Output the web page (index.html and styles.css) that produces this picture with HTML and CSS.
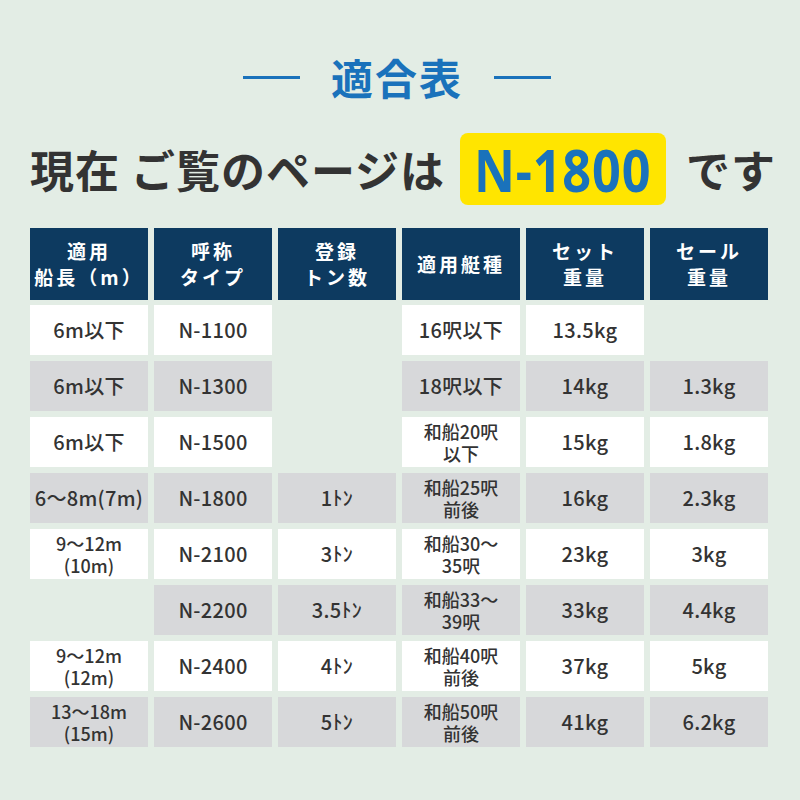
FILE: index.html
```html
<!DOCTYPE html>
<html lang="ja">
<head>
<meta charset="utf-8">
<link rel="stylesheet" href="styles.css">
</head>
<body>
<div class="page">
  <div class="title">
    <span class="rule"></span>
    <h1>適合表</h1>
    <span class="rule"></span>
  </div>
  <div class="lead">
    <span class="lead-text">現在 ご覧のページは</span>
    <span class="badge"><span class="badge-text">N-1800</span></span>
    <span class="lead-text">です</span>
  </div>
  <div class="table">
    <div class="th">適用<br>船長（m）</div>
    <div class="th">呼称<br>タイプ</div>
    <div class="th">登録<br>トン数</div>
    <div class="th">適用艇種</div>
    <div class="th">セット<br>重量</div>
    <div class="th">セール<br>重量</div>

    <div class="td w">6m以下</div>
    <div class="td w">N-1100</div>
    <div class="td e"></div>
    <div class="td w">16呎以下</div>
    <div class="td w">13.5kg</div>
    <div class="td e"></div>

    <div class="td g">6m以下</div>
    <div class="td g">N-1300</div>
    <div class="td e"></div>
    <div class="td g">18呎以下</div>
    <div class="td g">14kg</div>
    <div class="td g">1.3kg</div>

    <div class="td w">6m以下</div>
    <div class="td w">N-1500</div>
    <div class="td e"></div>
    <div class="td w sm"><span>和船20呎</span><span>以下</span></div>
    <div class="td w">15kg</div>
    <div class="td w">1.8kg</div>

    <div class="td g">6〜8m(7m)</div>
    <div class="td g">N-1800</div>
    <div class="td g">1ﾄﾝ</div>
    <div class="td g sm"><span>和船25呎</span><span>前後</span></div>
    <div class="td g">16kg</div>
    <div class="td g">2.3kg</div>

    <div class="td w sm"><span>9〜12m</span><span>(10m)</span></div>
    <div class="td w">N-2100</div>
    <div class="td w">3ﾄﾝ</div>
    <div class="td w sm"><span>和船30〜</span><span>35呎</span></div>
    <div class="td w">23kg</div>
    <div class="td w">3kg</div>

    <div class="td e"></div>
    <div class="td g">N-2200</div>
    <div class="td g">3.5ﾄﾝ</div>
    <div class="td g sm"><span>和船33〜</span><span>39呎</span></div>
    <div class="td g">33kg</div>
    <div class="td g">4.4kg</div>

    <div class="td w sm"><span>9〜12m</span><span>(12m)</span></div>
    <div class="td w">N-2400</div>
    <div class="td w">4ﾄﾝ</div>
    <div class="td w sm"><span>和船40呎</span><span>前後</span></div>
    <div class="td w">37kg</div>
    <div class="td w">5kg</div>

    <div class="td g sm"><span>13〜18m</span><span>(15m)</span></div>
    <div class="td g">N-2600</div>
    <div class="td g">5ﾄﾝ</div>
    <div class="td g sm"><span>和船50呎</span><span>前後</span></div>
    <div class="td g">41kg</div>
    <div class="td g">6.2kg</div>
  </div>
</div>
</body>
</html>
```

FILE: styles.css
```css
* { box-sizing: border-box; }
html, body { margin: 0; padding: 0; }
body {
  background: #e3ede5;
  font-family: "Noto Sans CJK JP", "Noto Sans", sans-serif;
  color: #333333;
  width: 800px;
  height: 800px;
  overflow: hidden;
}
.page {
  padding: 52px 0 0 30px;
}
.title {
  display: flex;
  align-items: center;
  justify-content: center;
  gap: 31px;
  height: 50px;
  width: 738px;
  margin-left: -2px;
}
.title h1 {
  margin: 0;
  font-size: 42px;
  font-weight: 700;
  color: #1a72bb;
  line-height: 50px;
  letter-spacing: 2px;
}
.rule {
  width: 57px;
  height: 3px;
  background: #1a72bb;
}
.lead {
  display: flex;
  align-items: center;
  margin-top: 30px;
  height: 74px;
  white-space: nowrap;
}
.lead-text {
  flex-shrink: 0;
  font-size: 44px;
  font-weight: 700;
  color: #333333;
  line-height: 1;
  letter-spacing: 1px;
}
.badge {
  flex-shrink: 0;
  margin: 0 20px 0 15px;
  background: #ffe500;
  border-radius: 8px;
  height: 72px;
  width: 206px;
  display: flex;
  align-items: center;
  justify-content: center;
}
.badge-text {
  display: inline-block;
  white-space: nowrap;
  color: #1a72bb;
  font-size: 60px;
  font-weight: 700;
  line-height: 1;
  letter-spacing: 1px;
  font-family: "Noto Sans", "Noto Sans CJK JP", sans-serif;
  transform: scaleX(0.84);
}
.table {
  margin-top: 22px;
  width: 738px;
  display: grid;
  grid-template-columns: repeat(6, 1fr);
  grid-template-rows: 71px repeat(8, 50px);
  column-gap: 6px;
  row-gap: 6px;
}
.th {
  background: #0d3a60;
  color: #ffffff;
  font-size: 19px;
  font-weight: 700;
  line-height: 26px;
  letter-spacing: 3px;
  display: flex;
  align-items: center;
  justify-content: center;
  text-align: center;
  margin-bottom: -1px;
}
.td {
  display: flex;
  flex-direction: column;
  align-items: center;
  justify-content: center;
  text-align: center;
  font-size: 20px;
  font-weight: 500;
  line-height: 24px;
  letter-spacing: 0.3px;
  color: #333333;
}
.td.sm { font-size: 18px; line-height: 22px; letter-spacing: 0; }
.td.sm span { display: block; }
.w { background: #ffffff; }
.g { background: #d7d8da; }
.e { background: transparent; }
```
